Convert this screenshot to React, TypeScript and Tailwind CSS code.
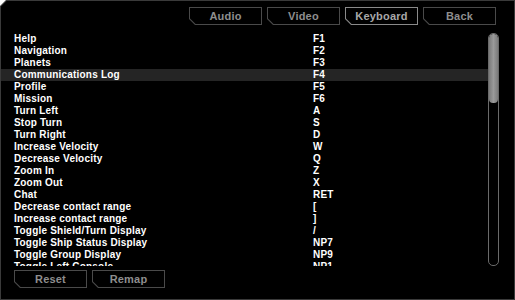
import React from "react";

const bindings: [string, string][] = [
  ["Help", "F1"],
  ["Navigation", "F2"],
  ["Planets", "F3"],
  ["Communications Log", "F4"],
  ["Profile", "F5"],
  ["Mission", "F6"],
  ["Turn Left", "A"],
  ["Stop Turn", "S"],
  ["Turn Right", "D"],
  ["Increase Velocity", "W"],
  ["Decrease Velocity", "Q"],
  ["Zoom In", "Z"],
  ["Zoom Out", "X"],
  ["Chat", "RET"],
  ["Decrease contact range", "["],
  ["Increase contact range", "]"],
  ["Toggle Shield/Turn Display", "/"],
  ["Toggle Ship Status Display", "NP7"],
  ["Toggle Group Display", "NP9"],
  ["Toggle Left Console", "NP1"],
];

function ChamferButton({ label, active }: { label: string; active?: boolean }) {
  return (
    <div
      className={`w-[73px] h-[18px] p-px [clip-path:polygon(0_0,100%_0,100%_100%,6px_100%,0_calc(100%-6px))] ${
        active ? "bg-[#8a8a8a]" : "bg-[#4a4a4a]"
      }`}
    >
      <div
        className={`w-full h-full bg-black flex items-center justify-center text-[11px] font-bold tracking-[0.2px] [clip-path:polygon(0_0,100%_0,100%_100%,5.6px_100%,0_calc(100%-5.6px))] ${
          active ? "text-[#a8a8a8]" : "text-[#8e8e8e]"
        }`}
      >
        {label}
      </div>
    </div>
  );
}

export default function App() {
  return (
    <div className="w-[515px] h-[300px] bg-[#3a3a3a] p-px [clip-path:polygon(6px_0,100%_0,100%_100%,0_100%,0_6px)] font-['Liberation_Sans',sans-serif]">
      <div className="w-full h-full bg-black flex flex-col [clip-path:polygon(5.6px_0,100%_0,100%_100%,0_100%,0_5.6px)]">
        <div className="flex justify-end gap-[5px] pt-[6px] pr-[18px]">
          <ChamferButton label="Audio" />
          <ChamferButton label="Video" />
          <ChamferButton label="Keyboard" active />
          <ChamferButton label="Back" />
        </div>

        <div className="flex mt-[8px] h-[233px]">
          <div className="w-[487px] overflow-hidden">
            {bindings.map(([action, key]) => (
              <div
                key={action}
                className={`flex h-[12px] items-center text-[10px] leading-[12px] font-bold tracking-[0.2px] text-white ${
                  action === "Communications Log" ? "bg-[#252525]" : ""
                }`}
              >
                <span className="pl-[13px] w-[312px]">{action}</span>
                <span>{key}</span>
              </div>
            ))}
          </div>
          <div className="w-[11px] h-full rounded-[5px] border border-[#6a6a6a] overflow-hidden">
            <div className="h-[69px] bg-gradient-to-r from-[#7a7a7a] via-[#9a9a9a] to-[#7a7a7a] rounded-[4px]" />
          </div>
        </div>

        <div className="flex gap-[5px] pl-[13px] mt-[4px]">
          <ChamferButton label="Reset" />
          <ChamferButton label="Remap" />
        </div>
      </div>
    </div>
  );
}
